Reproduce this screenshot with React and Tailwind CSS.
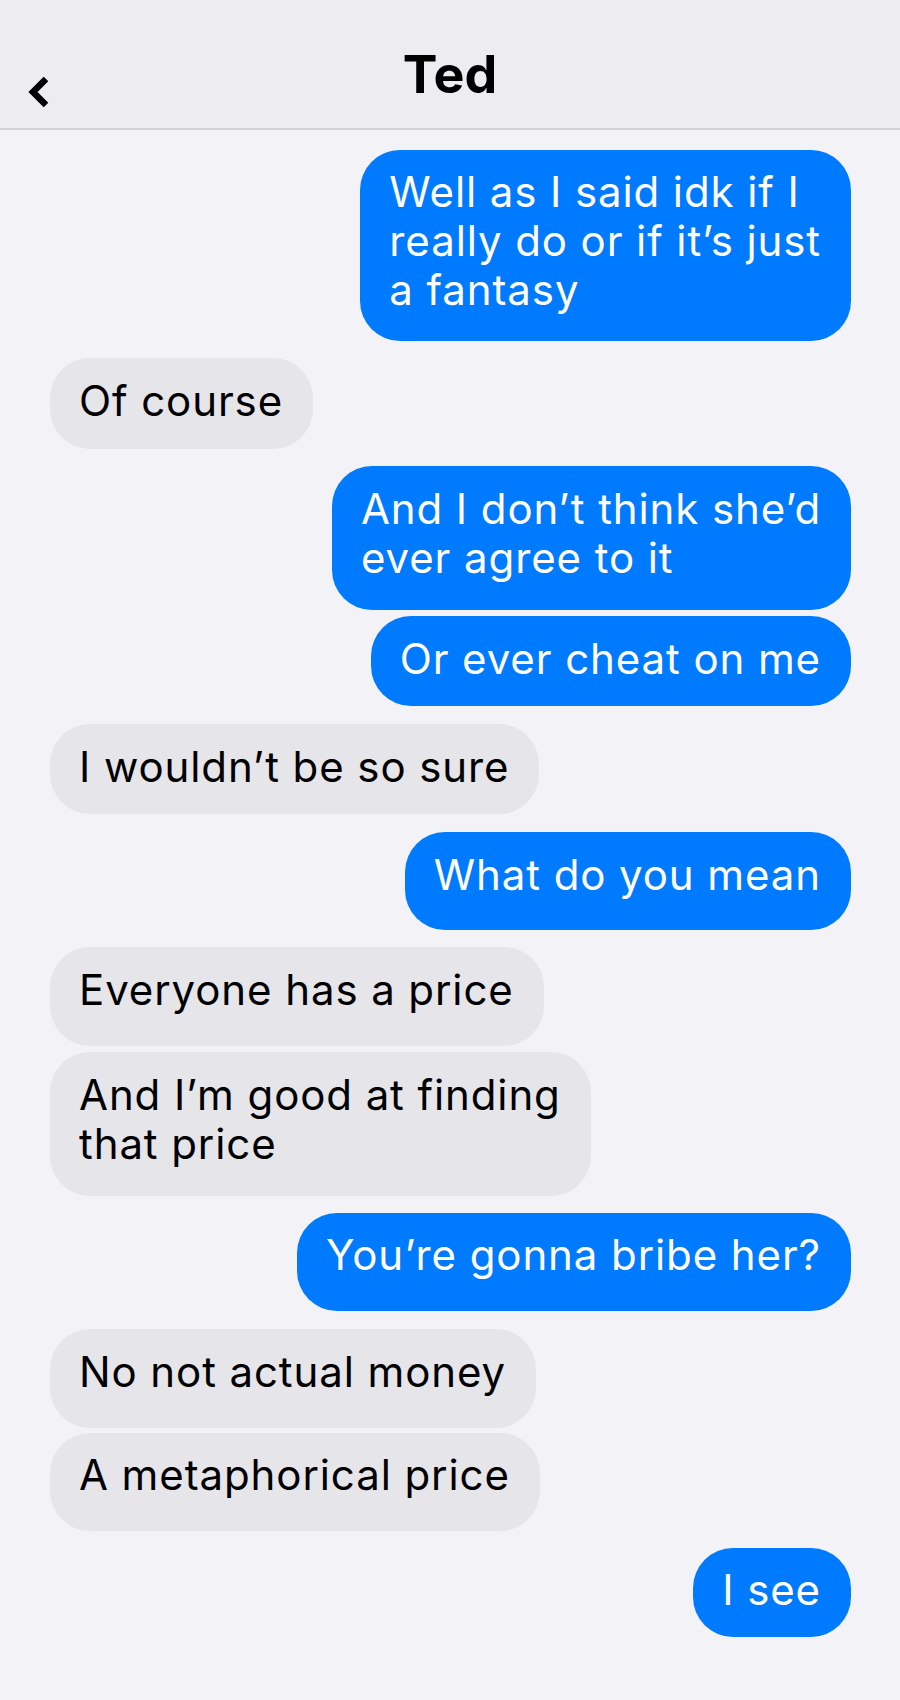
import React from 'react'

const messages = [
    { me: true, lines: ['Well as I said idk if I', 'really do or if it’s just', 'a fantasy'], gap: 'mt-0', pad: 'pt-[17px] pb-[27px]' },
    { me: false, lines: ['Of course'], gap: 'mt-[17px]', pad: 'pt-[18px] pb-[24px]' },
    { me: true, lines: ['And I don’t think she’d', 'ever agree to it'], gap: 'mt-[17px]', pad: 'pt-[18px] pb-[28px]' },
    { me: true, lines: ['Or ever cheat on me'], gap: 'mt-[6px]', pad: 'pt-[18px] pb-[23px]' },
    { me: false, lines: ['I wouldn’t be so sure'], gap: 'mt-[18px]', pad: 'pt-[18px] pb-[23px]' },
    { me: true, lines: ['What do you mean'], gap: 'mt-[18px]', pad: 'pt-[18px] pb-[31px]' },
    { me: false, lines: ['Everyone has a price'], gap: 'mt-[17px]', pad: 'pt-[18px] pb-[32px]' },
    { me: false, lines: ['And I’m good at finding', 'that price'], gap: 'mt-[6px]', pad: 'pt-[18px] pb-[28px]' },
    { me: true, lines: ['You’re gonna bribe her?'], gap: 'mt-[17px]', pad: 'pt-[17px] pb-[32px]' },
    { me: false, lines: ['No not actual money'], gap: 'mt-[18px]', pad: 'pt-[18px] pb-[32px]' },
    { me: false, lines: ['A metaphorical price'], gap: 'mt-[5px]', pad: 'pt-[17px] pb-[32px]' },
    { me: true, lines: ['I see'], gap: 'mt-[17px]', pad: 'pt-[17px] pb-[23px]' },
]

const Bubble = ({ me, lines, gap, pad }) => (
    <div className={`flex ${me ? 'justify-end' : 'justify-start'} ${gap}`}>
        <div
            className={`${pad} pl-[29px] pr-[30px] rounded-[40px] whitespace-nowrap text-[42px] leading-[49px] tracking-[0.9px] ${
                me ? 'bg-[#007AFF] text-white' : 'bg-[#E5E5EA] text-black'
            }`}
        >
            {lines.map((line, i) => (
                <div key={i}>{line}</div>
            ))}
        </div>
    </div>
)

const App = () => {
    return (
        <div className="min-h-screen bg-[#F2F2F7] font-['Inter','Noto_Sans',sans-serif]">
            {/* Header */}
            <div className="h-[130px] grid grid-cols-[1fr_auto_1fr] items-start pt-[49px] bg-[#ECECF1] border-b-2 border-[#D1D1D6]">
                <div className="mt-[28px] ml-[27px]">
                    <svg width="22" height="30" viewBox="0 0 22 30">
                        <polyline
                            points="19,2 6,15 19,28"
                            fill="none"
                            stroke="#000"
                            strokeWidth="6.5"
                            strokeLinecap="butt"
                            strokeLinejoin="miter"
                        />
                    </svg>
                </div>
                <h1 className="text-[52px] leading-[52px] font-bold text-black">
                    Ted
                </h1>
                <div />
            </div>

            {/* Messages */}
            <div className="pt-[20px] pl-[50px] pr-[49px] pb-[40px]">
                {messages.map((m, i) => (
                    <Bubble key={i} {...m} />
                ))}
            </div>
        </div>
    )
}

export default App
